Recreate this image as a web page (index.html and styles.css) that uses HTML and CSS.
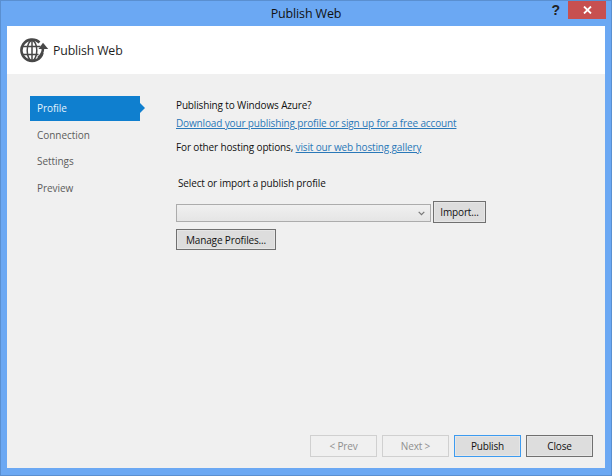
FILE: index.html
```html
<!DOCTYPE html>
<html lang="en">
<head>
<meta charset="utf-8">
<title>Publish Web</title>
<link rel="stylesheet" href="styles.css">
</head>
<body>
<div class="window">
  <div class="titlebar">
    <div class="title">Publish Web</div>
    <div class="help">?</div>
    <div class="close-x">
      <svg width="9" height="8" viewBox="0 0 9 8"><path d="M1 .5l7 7M8 .5l-7 7" stroke="#fff" stroke-width="1.8" fill="none"/></svg>
    </div>
  </div>
  <div class="client">
    <header class="head">
      <svg class="logo" width="29" height="25" viewBox="0 0 29 25">
        <g fill="none" stroke="#484848">
          <path d="M19.500 4.500A10.700 10.700 0 1 0 22.500 15" stroke-width="2.600"/>
          <ellipse cx="12" cy="12.500" rx="4.800" ry="10" stroke-width="1.500"/>
          <path d="M12 2v21M2.500 8.500h18M2.500 16.500h16" stroke-width="1.500"/>
        </g>
        <path d="M18 20c3.200-2.400 5-5.500 5-10" fill="none" stroke="#484848" stroke-width="2.600"/>
        <path d="M18.500 11L23 4.800L28.200 11Z" fill="#484848"/>
      </svg>
      <span class="head-title">Publish Web</span>
    </header>
    <div class="main">
      <nav class="side">
        <div class="step active">Profile</div>
        <div class="step">Connection</div>
        <div class="step">Settings</div>
        <div class="step">Preview</div>
      </nav>
      <section class="content">
        <p class="line q">Publishing to Windows Azure?</p>
        <p class="line dl"><a class="link" href="#">Download your publishing profile or sign up for a free account</a></p>
        <p class="line other">For other hosting options, <a class="link" href="#">visit our web hosting gallery</a></p>
        <p class="line sel">Select or import a publish profile</p>
        <div class="row">
          <div class="combo">
            <svg width="7" height="5" viewBox="0 0 7 5"><path d="M.7.8l2.800 2.800L6.300.8" stroke="#777" stroke-width="1.200" fill="none"/></svg>
          </div>
          <button class="btn import">Import...</button>
        </div>
        <button class="btn manage">Manage Profiles...</button>
      </section>
    </div>
    <footer class="foot">
      <button class="btn nav off">&lt; Prev</button>
      <button class="btn nav off">Next &gt;</button>
      <button class="btn nav primary">Publish</button>
      <button class="btn nav">Close</button>
    </footer>
  </div>
</div>
</body>
</html>
```
FILE: styles.css
```css
* { box-sizing: border-box; }
html, body { margin: 0; padding: 0; }
body { width: 612px; height: 476px; overflow: hidden; font-family: "Open Sans", sans-serif; font-size: 10px; letter-spacing: -0.14px; color: #111; }
.window { width: 612px; height: 476px; background: #6ba8f3; border: 1px solid #5a8fd0; padding: 0 6px 7px; display: flex; flex-direction: column; }
.titlebar { height: 25px; flex: none; display: flex; align-items: flex-start; position: relative; }
.title { position: absolute; left: 0; right: 0; top: 4px; text-align: center; font-size: 12.5px; line-height: 17px; color: #111; }
.help { margin-left: auto; margin-right: 8px; margin-top: 1px; font: bold 14px/16px "Liberation Sans", sans-serif; color: #222; }
.close-x { width: 38px; height: 18px; background: #c75050; display: flex; align-items: center; justify-content: center; margin-right: -1px; }
.client { flex: 1; background: #f0f0f0; display: flex; flex-direction: column; }
.head { height: 48px; background: #fff; display: flex; align-items: center; padding-left: 13px; flex: none; }
.logo { margin-right: 4px; }
.head-title { font-size: 12.3px; color: #1e1e1e; padding-top: 1px; }
.main { flex: 1; display: flex; padding: 22px 0 0 23px; }
.side { width: 146px; flex: none; }
.step { height: 26.5px; line-height: 26px; padding-left: 7px; color: #5c5c5c; font-size: 10px; width: 110px; letter-spacing: -0.05px; }
.active { height: 25px; line-height: 24px; background: #0f7fcf; color: #e4f2fc; position: relative; margin-bottom: 0.5px; }
.active::after { content: ""; position: absolute; left: 100%; top: 7px; border: 5px solid transparent; border-left-color: #0f7fcf; border-right-width: 0; }
.content { flex: 1; padding-top: 2px; }
.line { margin: 0; line-height: 14px; font-size: 10px; white-space: nowrap; }
.dl { margin-top: 4px; }
.other { margin-top: 10px; }
.sel { margin-top: 22px; margin-left: 2px; }
.link { color: #2a78b8; text-decoration: underline; }
.row { display: flex; align-items: flex-start; margin-top: 11px; gap: 2px; }
.combo { width: 255px; height: 18px; margin-top: 3px; border: 1px solid #acacac; background: linear-gradient(#f0f0f0, #e5e5e5); display: flex; align-items: center; justify-content: flex-end; padding-right: 5px; }
.btn { font-family: inherit; font-size: 10px; letter-spacing: inherit; color: #111; background: #dddddd; border: 1px solid #707070; padding: 0; height: 21px; display: block; box-shadow: inset 0 0 0 1px #e6e6e6; }
.import { width: 53px; height: 22px; }
.manage { width: 100px; margin-top: 6px; }
.foot { flex: none; display: flex; justify-content: flex-end; gap: 5px; padding-right: 12px; margin-bottom: 11px; }
.nav { width: 67px; height: 22px; }
.off { background: #f0f0f0; border-color: #d0d0d0; color: #8f8f8f; box-shadow: none; }
.primary { border-color: #3d9bf0; }
```
